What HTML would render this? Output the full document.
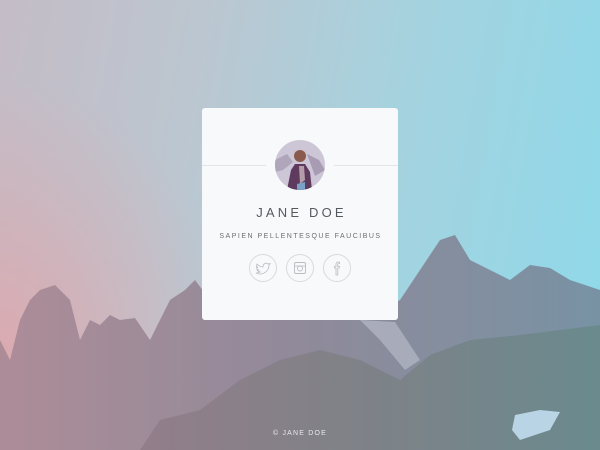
<!DOCTYPE html>
<html><head><meta charset="utf-8"><style>
html,body{margin:0;padding:0;width:600px;height:450px;overflow:hidden}
body{position:relative;background:linear-gradient(100deg,#c4bcc6 0%,#bcc6d0 30%,#a6d2de 60%,#8ed9ea 100%);font-family:"Liberation Sans",sans-serif}
.pink{position:absolute;inset:0;background:radial-gradient(ellipse 240px 280px at 0% 80%,rgba(230,160,165,.7),rgba(230,160,165,0) 100%)}
svg.bg{position:absolute;left:0;top:0}
.card{position:absolute;left:202px;top:108px;width:196px;height:212px;background:#f8f9fb;border-radius:3px}
.line{position:absolute;top:57px;height:1px;background:#e3e5e8}
.av{position:absolute;left:73px;top:32px;width:50px;height:50px;border-radius:50%;overflow:hidden}
.name{position:absolute;top:97px;left:0;width:196px;text-align:center;font-size:13px;letter-spacing:3.2px;color:#555a60;padding-left:3px;box-sizing:border-box}
.sub{position:absolute;top:125px;left:0;width:196px;text-align:center;font-size:7px;letter-spacing:1.5px;color:#6a6e74;padding-left:1px;box-sizing:border-box}
.ic{position:absolute;top:146px;width:26px;height:26px;border:1px solid #d8dade;border-radius:50%}
.foot{position:absolute;top:430px;left:0;width:600px;text-align:center;font-size:7px;letter-spacing:1.2px;color:#e8e8ee}
</style></head><body>
<div class="pink"></div>
<svg class="bg" width="600" height="450" viewBox="0 0 600 450">
<defs><linearGradient id="m" x1="0" x2="1"><stop offset="0" stop-color="#ad8c98"/><stop offset=".5" stop-color="#908a9a"/><stop offset="1" stop-color="#7892a4"/></linearGradient>
<linearGradient id="f" x1="0" x2="1"><stop offset="0" stop-color="#927e8a"/><stop offset=".5" stop-color="#7e8288"/><stop offset="1" stop-color="#6a8a8e"/></linearGradient></defs>
<path fill="url(#m)" d="M0,340 L10,360 L20,320 L30,300 L40,290 L55,285 L70,300 L80,340 L90,320 L100,325 L110,315 L120,320 L135,318 L150,340 L170,300 L185,290 L195,280 L210,300 L230,320 L360,320 L400,300 L420,270 L440,240 L455,235 L470,260 L490,270 L510,280 L530,265 L550,268 L570,280 L600,290 L600,450 L0,450Z"/>
<path fill="#c8ccd8" opacity=".5" d="M360,320 L395,322 L420,360 L405,370 L380,340Z"/>
<path fill="url(#f)" d="M140,450 L160,420 L200,410 L240,380 L280,360 L320,350 L360,360 L400,380 L430,355 L470,340 L520,335 L560,330 L600,325 L600,450Z"/>
<path fill="#b9d4e4" d="M515,415 L540,410 L560,412 L550,430 L520,440 L512,430Z"/>
</svg>
<div class="card">
<div class="line" style="left:0;width:64px"></div>
<div class="line" style="left:132px;width:64px"></div>
<div class="av"><svg width="50" height="50"><rect width="50" height="50" fill="#cdc6d6"/><path d="M0,20 L12,14 L18,22 L8,30 L0,32Z" fill="#b0a6bc"/><path d="M32,14 L44,20 L50,30 L40,36Z" fill="#a89cb4"/><path d="M12,50 L16,30 L20,24 L30,24 L35,32 L37,50Z" fill="#5e3a5e"/><path d="M24,26 L29,26 L30,40 L25,44Z" fill="#b49ca8"/><circle cx="25" cy="16" r="6" fill="#8a5a4e"/><path d="M22,44 L22,50 L30,50 L30,42Z" fill="#7aa2c8"/></svg></div>
<div class="name">JANE DOE</div>
<div class="sub">SAPIEN PELLENTESQUE FAUCIBUS</div>
<div class="ic" style="left:47px"><svg width="26" height="26" viewBox="0 0 26 26"><path d="M7,9 C9,11 11,12 13,12 C13,9 16,7 18,9 L20,8.5 L19,10 C19,15 15,19 10,19 C8,19 7,18.5 6,18 C8,18 9,17.5 10,17 C8,16.5 7.5,15.5 7,15 L8.5,15 C7,14 6.5,12.5 6.5,12 L8,12.5 C6.5,11.5 6.5,10 7,9Z" fill="none" stroke="#b8bcc2" stroke-width=".8"/></svg></div>
<div class="ic" style="left:84px"><svg width="26" height="26" viewBox="0 0 26 26"><rect x="7.5" y="7.5" width="11" height="11" rx="1.5" fill="none" stroke="#b8bcc2" stroke-width=".9"/><circle cx="13" cy="13.5" r="2.5" fill="none" stroke="#b8bcc2" stroke-width=".9"/><line x1="7.5" y1="11" x2="18.5" y2="11" stroke="#b8bcc2" stroke-width=".8"/></svg></div>
<div class="ic" style="left:121px"><svg width="26" height="26" viewBox="0 0 26 26"><path d="M12,20 L12,13 L10.5,13 L10.5,11.5 L12,11.5 L12,9.5 C12,8 13,7 14.5,7 L15.5,7 L15.5,8.5 L14.5,8.5 C14,8.5 13.8,9 13.8,9.5 L13.8,11.5 L15.5,11.5 L15.3,13 L13.8,13 L13.8,20Z" fill="none" stroke="#b8bcc2" stroke-width=".8"/></svg></div>
</div>
<div class="foot">© JANE DOE</div>
</body></html>
